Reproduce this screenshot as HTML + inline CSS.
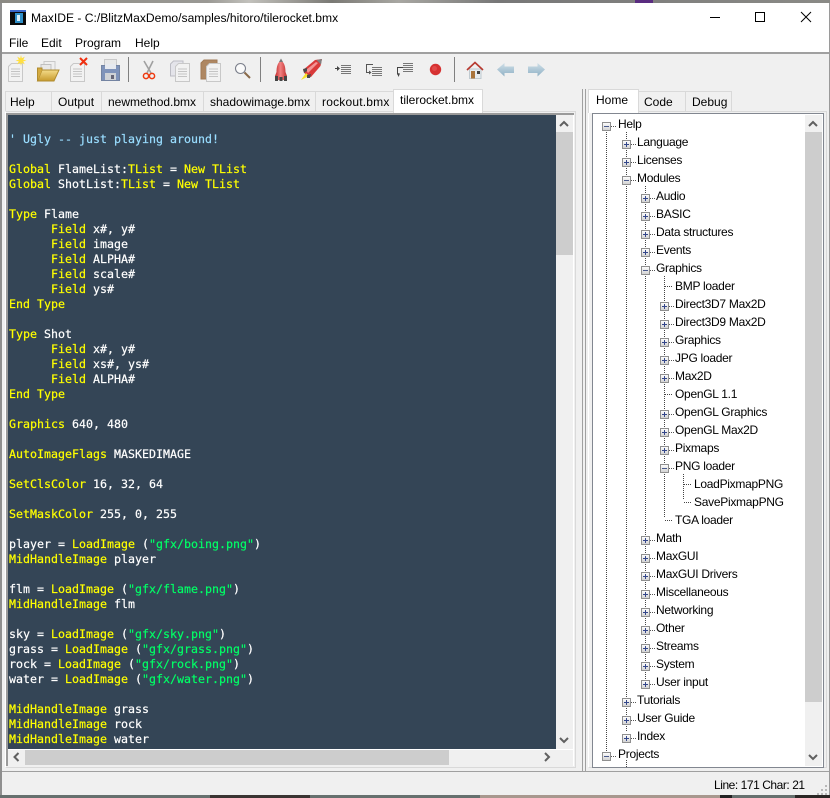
<!DOCTYPE html>
<html><head><meta charset="utf-8"><title>MaxIDE</title>
<style>
html,body{margin:0;padding:0;width:830px;height:798px;overflow:hidden;background:#f0f0f0}
div,pre,span{box-sizing:border-box}
.a{position:absolute}
#root{position:absolute;left:0;top:0;width:830px;height:798px;overflow:hidden;font-family:"Liberation Sans",sans-serif;font-size:12px;color:#000}
.m{position:absolute;top:36px;line-height:15px;font-size:12px}
.t{position:absolute;top:91px;height:20px;background:#f0f0f0;border:1px solid #d9d9d9;border-bottom:0;line-height:21px;text-align:left;font-size:12px;white-space:nowrap}
.on{top:89px;height:24px;background:#fff;line-height:21px;z-index:3}
pre{position:absolute;left:9px;top:132px;margin:0;font-family:"DejaVu Sans Mono","Liberation Mono",monospace;font-size:11.63px;line-height:15px;color:#fff;-webkit-text-stroke:.2px}
.k{color:#ff0}.s{color:#0f6}.c{color:#9df}
.r{position:absolute;height:18px;line-height:18px;font-size:12px;white-space:nowrap;color:#000;letter-spacing:-.28px}
</style></head><body><div id="root">

<div class="a" style="left:0;top:0;width:830px;height:3px;background:linear-gradient(90deg,#8b8a84 0,#9a9994 25%,#c2c1bc 30%,#7a7974 40%,#a8a7a2 48%,#777 60%,#8a8a86 100%)"></div>
<div class="a" style="left:635px;top:0;width:18px;height:3px;background:#5a2c80"></div>
<div class="a" style="left:0;top:3px;width:830px;height:50px;background:#fff"></div>
<div class="a" style="left:0;top:52px;width:830px;height:2px;background:#a0a0a0"></div>
<div class="a" style="left:0;top:54px;width:830px;height:741px;background:#f0f0f0"></div>
<div class="a" style="left:0;top:3px;width:2px;height:792px;background:#8f8f8f"></div>
<div class="a" style="left:829px;top:3px;width:1px;height:792px;background:#9a9a9a"></div>
<div class="a" style="left:0;top:795px;width:830px;height:3px;background:#66706e"></div>
<div class="a" style="left:210px;top:795px;width:100px;height:3px;background:#3a3432"></div>
<div class="a" style="left:480px;top:795px;width:240px;height:3px;background:#a8988e"></div>
<div class="a" style="left:720px;top:795px;width:12px;height:3px;background:#222"></div>
<div class="a" style="left:795px;top:795px;width:35px;height:3px;background:#2a2624"></div>

<svg class="a" style="left:0;top:0" width="830" height="100" viewBox="0 0 830 100">
<defs>
<linearGradient id="gf" x1="0" y1="0" x2="0" y2="1"><stop offset="0" stop-color="#f4dc8a"/><stop offset="1" stop-color="#c79a2c"/></linearGradient>
<linearGradient id="gr" x1="0" y1="0" x2="1" y2="0"><stop offset="0" stop-color="#c02a2a"/><stop offset=".45" stop-color="#f28080"/><stop offset="1" stop-color="#c03030"/></linearGradient>
<linearGradient id="ga" x1="0" y1="0" x2="0" y2="1"><stop offset="0" stop-color="#cfdfe8"/><stop offset="1" stop-color="#8fb0c4"/></linearGradient>
<g id="doc"><path d="M3.500.5H14.500V18.500H.5V3.500Z" fill="#f2f2f2" stroke="#c8c8c8"/><path d="M3 6h9M3 8.500h9M3 11h9M3 13.500h9" stroke="#c4c4c4" fill="none"/></g>
</defs>
<!-- title icon -->
<rect x="10" y="10" width="16" height="15" fill="#0a0a0a"/><rect x="10" y="10" width="16" height="2" fill="#3a66c8"/>
<rect x="15" y="13" width="8" height="10" fill="#2f8fc8"/><rect x="17" y="15" width="3" height="6" fill="#d9eef8"/>
<!-- window controls -->
<path d="M710 17.500H720" stroke="#000"/>
<rect x="755.500" y="12.500" width="9" height="9" fill="none" stroke="#000"/>
<path d="M801 12L811 22M811 12L801 22" stroke="#000" fill="none"/>
<!-- new -->
<use href="#doc" x="8" y="63"/>
<path d="M21 55l.8 3.200 3-1.600-1.600 3 3.300.9-3.300.9 1.600 3-3-1.600-.8 3.200-.8-3.200-3 1.600 1.600-3-3.300-.9 3.300-.9-1.600-3 3 1.600z" fill="#ffdf40"/>
<!-- open -->
<path d="M44 61.500H55V72H44Z" fill="#efefef" stroke="#c8c8c8"/><path d="M41 64.500H51V72H41Z" fill="#e8e8e8" stroke="#c0c0c0"/>
<path d="M37.500 81L42 70H59L54 81Z" fill="url(#gf)" stroke="#b08c30"/><path d="M37.500 81V68H42V70" fill="#d4aa40" stroke="#b08c30"/>
<!-- delete -->
<use href="#doc" x="70" y="63"/>
<path d="M80 58l7 7M87 58l-7 7" stroke="#f03010" stroke-width="2"/>
<!-- save -->
<rect x="104.500" y="59.500" width="12" height="9" fill="#e8e8e8" stroke="#cacaca"/>
<path d="M101.500 65.500H119.500V80.500H101.500Z" fill="#7f93ba" stroke="#7484a2"/><rect x="105" y="64" width="11" height="5" fill="#e6e9ef"/><rect x="105" y="73" width="11" height="7" fill="#cfd2d6"/><rect x="111" y="75" width="3" height="4" fill="#667"/>
<!-- separator -->
<path d="M128.500 57V82M260.500 57V82M454.500 57V82" stroke="#808080"/>
<!-- scissors -->
<path d="M144 61L151 73M153 61L147 73" stroke="#a0a0a0" stroke-width="1.600" fill="none"/>
<circle cx="146" cy="76" r="2.600" fill="none" stroke="#ee3a10" stroke-width="1.500"/><circle cx="152" cy="76" r="2.600" fill="none" stroke="#ee3a10" stroke-width="1.500"/>
<!-- copy -->
<path d="M173.500 61H183V76H170.500V64Z" fill="#e4e4ea" stroke="#bcbcc4"/>
<use href="#doc" x="175" y="63"/>
<!-- paste -->
<path d="M204 60H217V66H209V79H201V63Z" fill="#ae8762" stroke="#a07a56"/>
<use href="#doc" x="206" y="63"/>
<!-- find -->
<circle cx="240.500" cy="68.500" r="5" fill="#fafafa" stroke="#7c808c" stroke-width="1.100"/><path d="M244.500 72.500L250 78" stroke="#8a6a4a" stroke-width="2"/>
<!-- rocket -->
<path d="M281 60C284.500 63 285.500 67 285.500 72L287 76V80H275V76L276.500 72C276.500 67 277.500 63 281 60Z" fill="url(#gr)"/>
<path d="M281 58.500L279 62H283Z" fill="#777"/><path d="M275 76h3v5h-3zM284 76h3v5h-3zM279.500 77h3v4h-3z" fill="#454545"/>
<!-- rocket 2 -->
<path d="M303 70L315 60L322 59L320.500 66L311 77L306 76Z" fill="#d93a3a"/><path d="M306 70L316 62L318 63L308 73Z" fill="#f39494"/><path d="M316.500 60L322 59L321 64.500Z" fill="#808080"/>
<path d="M301 80L306 73L309 76Z" fill="#f5e22a"/><path d="M303 69L307 68V71L304 73ZM307 75L311 74L310 78L307 78Z" fill="#4a4a4a"/>
<!-- indent -->
<path d="M341 65.500h10M341 67.500h10M341 69.500h10M341 71.500h10M341 73.500h10" stroke="#777" fill="none"/>
<path d="M335 68h2v-2l3 2.500-3 2.500v-2h-2z" fill="#444"/>
<!-- outdent -->
<path d="M372 67.500h10M372 69.500h10M372 71.500h10M372 73.500h10M372 75.500h10" stroke="#777" fill="none"/>
<path d="M373 64.500h-6.500v8h3" stroke="#555" fill="none"/><path d="M369 70.500l2.500 2-2.500 2z" fill="#555"/>
<!-- step out -->
<path d="M403 63.500h10M403 65.500h10M403 67.500h10M403 69.500h10M403 71.500h10" stroke="#777" fill="none"/>
<path d="M403 67.500h-5.500v7" stroke="#444" fill="none"/><path d="M397 73l3 .5-1.500 3.500z" fill="#444"/>
<!-- breakpoint -->
<circle cx="435.500" cy="69.500" r="5.700" fill="#d63232"/><circle cx="434.500" cy="68.500" r="2.500" fill="#e24a4a"/>
<!-- home -->
<path d="M469.500 69H481V78.500H469.500Z" fill="#e6ecf0" stroke="#c0cad0"/><rect x="471" y="71" width="4" height="7.500" fill="#a9743c"/><rect x="477" y="71" width="3" height="3" fill="#444"/>
<path d="M467 70L475 62.500L483 70" fill="none" stroke="#b73a30" stroke-width="1.700"/>
<!-- back -->
<path d="M497 69.500L504.500 63V66.500H514V73H504.500V76.500Z" fill="url(#ga)"/>
<!-- forward -->
<path d="M545 69.500L537.500 63V66.500H528V73H537.500V76.500Z" fill="url(#ga)"/>
</svg>

<div class="a" style="left:31px;top:11px;line-height:15px;font-size:12.1px;white-space:nowrap">MaxIDE - C:/BlitzMaxDemo/samples/hitoro/tilerocket.bmx</div>
<div class="m" style="left:9px">File</div><div class="m" style="left:41px">Edit</div><div class="m" style="left:75px">Program</div><div class="m" style="left:135px">Help</div>

<!-- editor tabs -->
<div class="t" style="left:5px;width:47px;padding-left:4px">Help</div>
<div class="t" style="left:51px;width:51px;padding-left:6px">Output</div>
<div class="t" style="left:101px;width:103px;padding-left:6px">newmethod.bmx</div>
<div class="t" style="left:203px;width:113px;padding-left:6px">shadowimage.bmx</div>
<div class="t" style="left:315px;width:79px;padding-left:6px;letter-spacing:.2px">rockout.bmx</div>
<div class="t on" style="left:393px;width:90px;padding-left:6px">tilerocket.bmx</div>

<!-- editor panel -->
<div class="a" style="left:5px;top:111px;width:571px;height:657px;background:#f0f0f0;border:1px solid #d9d9d9;border-left-color:#fff;"></div>
<div class="a" style="left:6px;top:113px;width:568px;height:653px;background:#fff;border-top:2px solid #9a9a9a;border-left:2px solid #9a9a9a"></div>
<div class="a" style="left:8px;top:115px;width:548px;height:634px;background:#344556"></div>
<pre><span class="c">' Ugly -- just playing around!</span>

<span class="k">Global</span> FlameList:<span class="k">TList</span> = <span class="k">New TList</span>
<span class="k">Global</span> ShotList:<span class="k">TList</span> = <span class="k">New TList</span>

<span class="k">Type</span> Flame
      <span class="k">Field</span> x#, y#
      <span class="k">Field</span> image
      <span class="k">Field</span> ALPHA#
      <span class="k">Field</span> scale#
      <span class="k">Field</span> ys#
<span class="k">End Type</span>

<span class="k">Type</span> Shot
      <span class="k">Field</span> x#, y#
      <span class="k">Field</span> xs#, ys#
      <span class="k">Field</span> ALPHA#
<span class="k">End Type</span>

<span class="k">Graphics</span> 640, 480

<span class="k">AutoImageFlags</span> MASKEDIMAGE

<span class="k">SetClsColor</span> 16, 32, 64

<span class="k">SetMaskColor</span> 255, 0, 255

player = <span class="k">LoadImage</span> (<span class="s">"gfx/boing.png"</span>)
<span class="k">MidHandleImage</span> player

flm = <span class="k">LoadImage</span> (<span class="s">"gfx/flame.png"</span>)
<span class="k">MidHandleImage</span> flm

sky = <span class="k">LoadImage</span> (<span class="s">"gfx/sky.png"</span>)
grass = <span class="k">LoadImage</span> (<span class="s">"gfx/grass.png"</span>)
rock = <span class="k">LoadImage</span> (<span class="s">"gfx/rock.png"</span>)
water = <span class="k">LoadImage</span> (<span class="s">"gfx/water.png"</span>)

<span class="k">MidHandleImage</span> grass
<span class="k">MidHandleImage</span> rock
<span class="k">MidHandleImage</span> water</pre>

<!-- editor scrollbars -->
<div class="a" style="left:556px;top:115px;width:17px;height:634px;background:#f0f0f0"></div>
<div class="a" style="left:556px;top:132px;width:17px;height:123px;background:#cdcdcd"></div>
<div class="a" style="left:8px;top:750px;width:565px;height:16px;background:#f0f0f0"></div>
<div class="a" style="left:25px;top:750px;width:424px;height:15px;background:#cdcdcd"></div>

<!-- splitter -->
<div class="a" style="left:582px;top:89px;width:1px;height:682px;background:#a0a0a0"></div>
<div class="a" style="left:585px;top:89px;width:1px;height:682px;background:#a0a0a0"></div>

<!-- side tabs -->
<div class="t" style="left:638px;width:48px;padding-left:5px">Code</div>
<div class="t" style="left:685px;width:47px;padding-left:6px">Debug</div>
<div class="t on" style="left:588px;width:51px;padding-left:7px">Home</div>

<!-- tree panel -->
<div class="a" style="left:588px;top:111px;width:239px;height:657px;background:#f0f0f0;border:1px solid #d9d9d9;border-left-color:#fff"></div>
<div class="a" style="left:592px;top:113px;width:232px;height:655px;background:#fff;border:1px solid #828790;overflow:hidden"></div>
<div class="a" style="left:805px;top:115px;width:17px;height:651px;background:#f0f0f0"></div>
<div class="a" style="left:805px;top:132px;width:17px;height:570px;background:#cdcdcd"></div>

<svg class="a" style="left:0;top:0;z-index:4" width="830" height="798" viewBox="0 0 830 798">
<defs>
<linearGradient id="gb" x1="0" y1="0" x2="0" y2="1"><stop offset="0" stop-color="#fff"/><stop offset="1" stop-color="#d0d0d0"/></linearGradient>
<g id="mi"><path d="M9 4.500h1M11 4.500h1M13 4.500h1" stroke="#555"/><rect x=".5" y=".5" width="8" height="8" fill="url(#gb)" stroke="#8f8f8f"/><path d="M2 4.500h5" stroke="#4a5a8c"/></g>
<g id="pl"><path d="M9 4.500h1M11 4.500h1M13 4.500h1" stroke="#555"/><rect x=".5" y=".5" width="8" height="8" fill="url(#gb)" stroke="#8f8f8f"/><path d="M2 4.500h5M4.500 2v5" stroke="#33468a"/></g>
</defs>
<g stroke="#444" stroke-dasharray="1 1" fill="none">
<path d="M606.500 130V751"/>
<path d="M626.500 132V732M626.500 760V767"/>
<path d="M645.500 186V679"/>
<path d="M664.500 276V518"/>
<path d="M683.500 474V500"/>
<path d="M665 286.500h8M665 394.500h8M665 520.500h8M684 484.500h8M684 502.500h8"/>
</g>
<!-- L0 -->
<use href="#mi" x="602" y="122"/><use href="#mi" x="602" y="752"/>
<!-- L1 -->
<use href="#pl" x="622" y="140"/><use href="#pl" x="622" y="158"/><use href="#mi" x="622" y="176"/>
<use href="#pl" x="622" y="698"/><use href="#pl" x="622" y="716"/><use href="#pl" x="622" y="734"/>
<!-- L2 -->
<use href="#pl" x="641" y="194"/><use href="#pl" x="641" y="212"/><use href="#pl" x="641" y="230"/><use href="#pl" x="641" y="248"/><use href="#mi" x="641" y="266"/>
<use href="#pl" x="641" y="536"/><use href="#pl" x="641" y="554"/><use href="#pl" x="641" y="572"/><use href="#pl" x="641" y="590"/><use href="#pl" x="641" y="608"/><use href="#pl" x="641" y="626"/><use href="#pl" x="641" y="644"/><use href="#pl" x="641" y="662"/><use href="#pl" x="641" y="680"/>
<!-- L3 -->
<use href="#pl" x="660" y="302"/><use href="#pl" x="660" y="320"/><use href="#pl" x="660" y="338"/><use href="#pl" x="660" y="356"/><use href="#pl" x="660" y="374"/>
<use href="#pl" x="660" y="410"/><use href="#pl" x="660" y="428"/><use href="#pl" x="660" y="446"/><use href="#mi" x="660" y="464"/>
<!-- scrollbar arrows -->
<g fill="none" stroke="#606060" stroke-width="2">
<path d="M560 126L564 122L568 126M560 738L564 742L568 738"/>
<path d="M809 126L813 122L817 126M809 755L813 759L817 755"/>
<path d="M18.500 753L14.500 757L18.500 761M545 753L549 757L545 761"/>
</g>
<!-- size grip -->
<g fill="#b8b8b8"><rect x="825" y="785" width="2" height="2"/><rect x="821" y="789" width="2" height="2"/><rect x="825" y="789" width="2" height="2"/><rect x="817" y="793" width="2" height="2"/><rect x="821" y="793" width="2" height="2"/><rect x="825" y="793" width="2" height="2"/></g>
</svg>

<div style="position:absolute;left:0;top:0;z-index:5">
<div class="r" style="left:618px;top:115px">Help</div>
<div class="r" style="left:637px;top:133px">Language</div>
<div class="r" style="left:637px;top:151px">Licenses</div>
<div class="r" style="left:637px;top:169px">Modules</div>
<div class="r" style="left:656px;top:187px">Audio</div>
<div class="r" style="left:656px;top:205px">BASIC</div>
<div class="r" style="left:656px;top:223px">Data structures</div>
<div class="r" style="left:656px;top:241px">Events</div>
<div class="r" style="left:656px;top:259px">Graphics</div>
<div class="r" style="left:675px;top:277px">BMP loader</div>
<div class="r" style="left:675px;top:295px">Direct3D7 Max2D</div>
<div class="r" style="left:675px;top:313px">Direct3D9 Max2D</div>
<div class="r" style="left:675px;top:331px">Graphics</div>
<div class="r" style="left:675px;top:349px">JPG loader</div>
<div class="r" style="left:675px;top:367px">Max2D</div>
<div class="r" style="left:675px;top:385px">OpenGL 1.1</div>
<div class="r" style="left:675px;top:403px">OpenGL Graphics</div>
<div class="r" style="left:675px;top:421px">OpenGL Max2D</div>
<div class="r" style="left:675px;top:439px">Pixmaps</div>
<div class="r" style="left:675px;top:457px">PNG loader</div>
<div class="r" style="left:694px;top:475px">LoadPixmapPNG</div>
<div class="r" style="left:694px;top:493px">SavePixmapPNG</div>
<div class="r" style="left:675px;top:511px">TGA loader</div>
<div class="r" style="left:656px;top:529px">Math</div>
<div class="r" style="left:656px;top:547px">MaxGUI</div>
<div class="r" style="left:656px;top:565px">MaxGUI Drivers</div>
<div class="r" style="left:656px;top:583px">Miscellaneous</div>
<div class="r" style="left:656px;top:601px">Networking</div>
<div class="r" style="left:656px;top:619px">Other</div>
<div class="r" style="left:656px;top:637px">Streams</div>
<div class="r" style="left:656px;top:655px">System</div>
<div class="r" style="left:656px;top:673px">User input</div>
<div class="r" style="left:637px;top:691px">Tutorials</div>
<div class="r" style="left:637px;top:709px">User Guide</div>
<div class="r" style="left:637px;top:727px">Index</div>
<div class="r" style="left:618px;top:745px">Projects</div>
</div>

<!-- status bar -->
<div class="a" style="left:2px;top:771px;width:827px;height:1px;background:#a0a0a0"></div>
<div class="a" style="left:714px;top:777px;line-height:16px;font-size:12px;white-space:nowrap;letter-spacing:-.45px">Line: 171 Char: 21</div>

</div></body></html>
